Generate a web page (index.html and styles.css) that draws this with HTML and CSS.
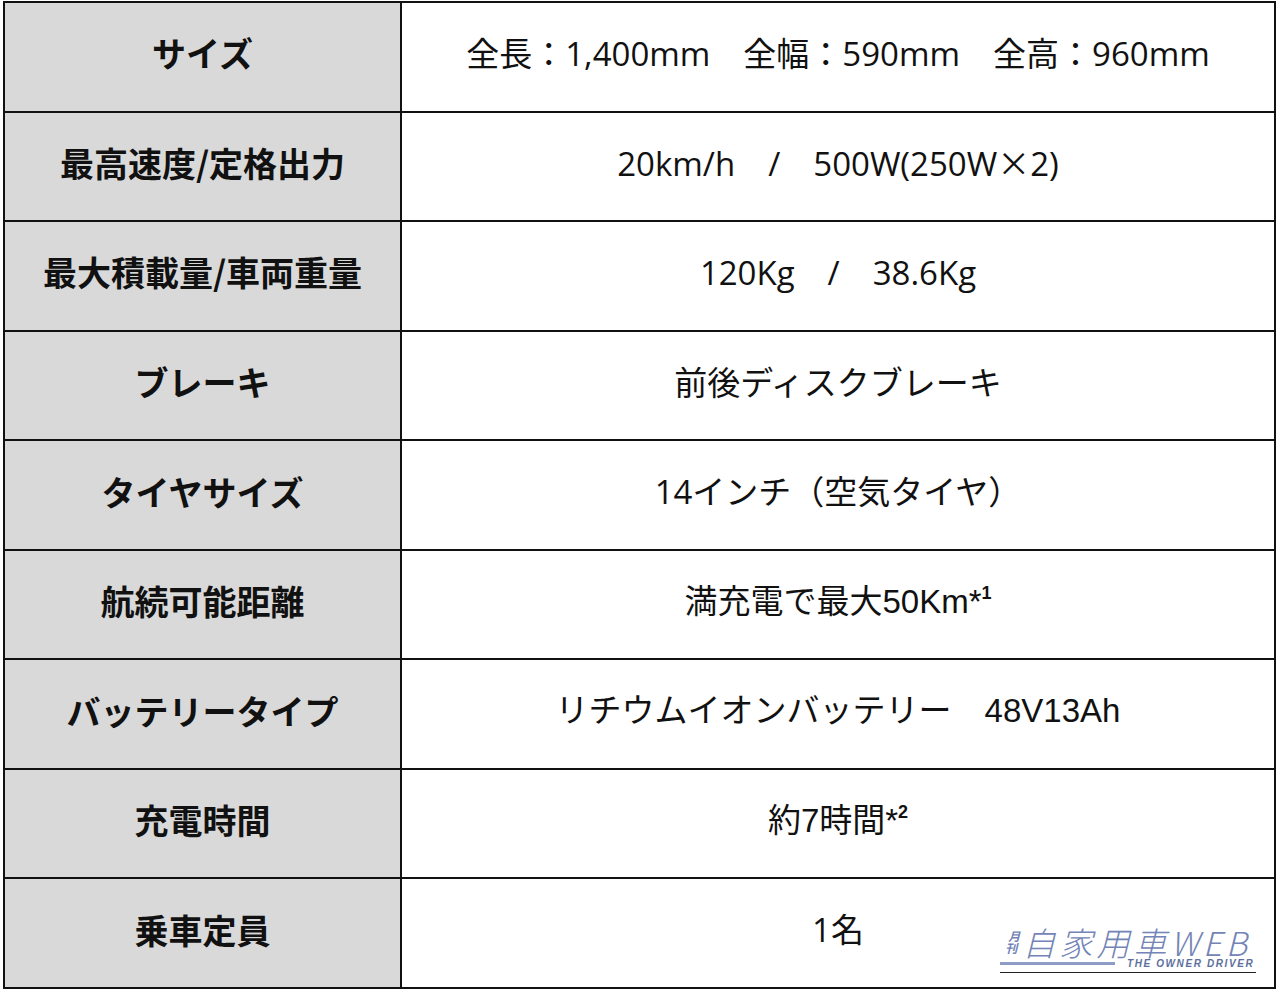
FILE: index.html
```html
<!DOCTYPE html>
<html lang="ja">
<head>
<meta charset="utf-8">
<link rel="stylesheet" href="styles.css">
</head>
<body>
<div class="wrap">
<table class="spec">
<tr><th>サイズ</th><td>全長：1,400mm　全幅：590mm　全高：960mm</td></tr>
<tr><th>最高速度/定格出力</th><td>20km/h　/　500W(250W<span class="cjk">×</span>2)</td></tr>
<tr><th>最大積載量/車両重量</th><td>120Kg　/　38.6Kg</td></tr>
<tr><th>ブレーキ</th><td>前後ディスクブレーキ</td></tr>
<tr><th>タイヤサイズ</th><td>14インチ（空気タイヤ）</td></tr>
<tr><th>航続可能距離</th><td class="alt">満充電で最大50Km*<span class="sup">1</span></td></tr>
<tr><th>バッテリータイプ</th><td class="alt">リチウムイオンバッテリー　48V13Ah</td></tr>
<tr><th>充電時間</th><td class="alt">約7時間*<span class="sup">2</span></td></tr>
<tr><th>乗車定員</th><td>1名</td></tr>
</table>
<div class="logo">
  <div class="logo-main"><span class="logo-small"><span>月</span><span>刊</span></span><span class="logo-text">自家用車WEB</span></div>
  <div class="logo-sub"><span class="logo-bar"></span><span class="logo-en">THE OWNER DRIVER</span></div>
  <div class="logo-line"></div>
</div>
</div>
</body>
</html>
```
FILE: styles.css
```css
html, body {
  margin: 0;
  padding: 0;
  background: #fff;
}
.wrap {
  position: relative;
  width: 1280px;
  height: 994px;
  padding: 1px 0 0 3px;
  box-sizing: border-box;
}
.spec {
  border-collapse: collapse;
  width: 1273px;
  height: 988px;
  table-layout: fixed;
  font-family: "Open Sans", "Noto Sans CJK JP", sans-serif;
  color: #111;
}
.spec th, .spec td {
  border: 2px solid #111;
  text-align: center;
  vertical-align: middle;
  padding: 0 0 6px 0;
  height: 101px;
  line-height: 1.2;
}
.spec th {
  width: 395px;
  background: #d9d9d9;
  font-weight: 700;
  font-size: 34px;
  font-family: "Noto Sans CJK JP", sans-serif;
}
.spec td {
  background: #fff;
  font-weight: 400;
  font-size: 33px;
}
.spec td.alt {
  font-family: "Liberation Sans", "Noto Sans CJK JP", sans-serif;
}
.cjk {
  font-family: "Noto Sans CJK JP", sans-serif;
}
.sup {
  font-size: 18px;
  vertical-align: 14px;
  line-height: 0;
  font-weight: 700;
}
.logo {
  position: absolute;
  left: 1000px;
  top: 924px;
  width: 256px;
  color: #7384b6;
  font-family: "Noto Sans CJK JP", sans-serif;
}
.logo-main {
  display: flex;
  align-items: center;
  gap: 6px;
  transform: skewX(-14deg);
  margin-left: 8px;
}
.logo-small {
  display: flex;
  flex-direction: column;
  font-size: 12px;
  line-height: 12px;
  font-weight: 700;
}
.logo-text {
  font-size: 33px;
  line-height: 36px;
  font-weight: 300;
  letter-spacing: 4px;
}
.logo-sub {
  display: flex;
  align-items: center;
  gap: 12px;
  margin-top: -2px;
  padding-left: 0;
}
.logo-bar {
  width: 115px;
  height: 3px;
  background: #8d9cc6;
}
.logo-en {
  font-family: "Liberation Sans", sans-serif;
  font-size: 10px;
  font-weight: 700;
  font-style: italic;
  letter-spacing: 1.6px;
  color: #5d6f9e;
}
.logo-line {
  height: 1px;
  background: #222;
  margin-top: 3px;
}
```
